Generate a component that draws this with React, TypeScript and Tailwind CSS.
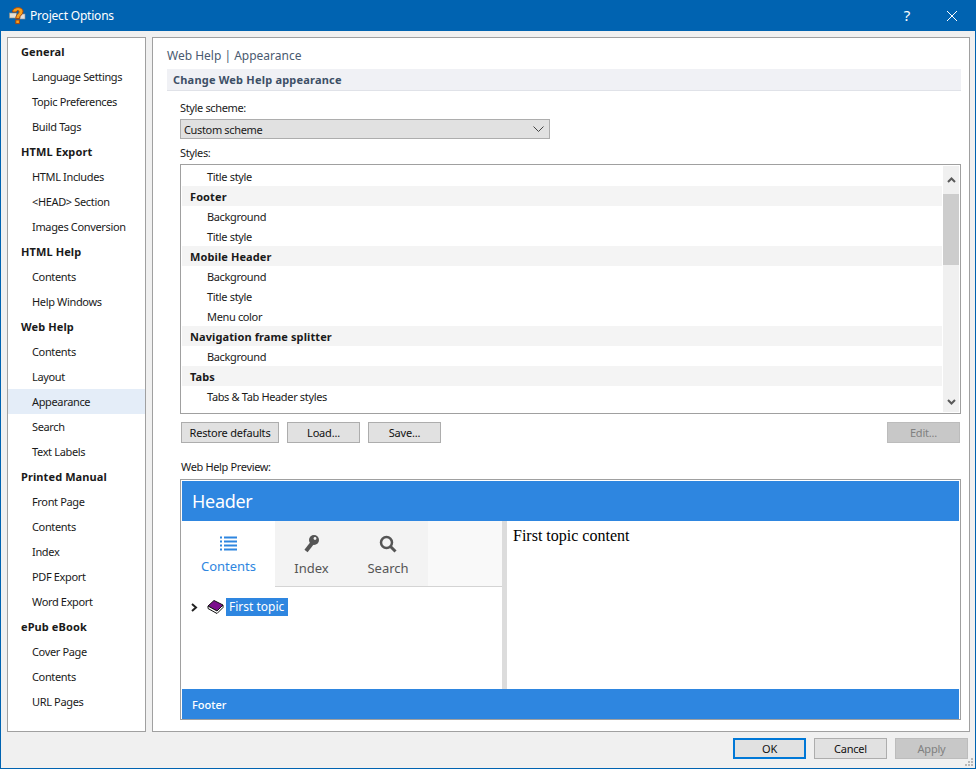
import React from 'react';

const sidebar: [string, boolean][] = [
  ['General', true], ['Language Settings', false], ['Topic Preferences', false], ['Build Tags', false],
  ['HTML Export', true], ['HTML Includes', false], ['<HEAD> Section', false], ['Images Conversion', false],
  ['HTML Help', true], ['Contents', false], ['Help Windows', false],
  ['Web Help', true], ['Contents', false], ['Layout', false], ['Appearance', false], ['Search', false], ['Text Labels', false],
  ['Printed Manual', true], ['Front Page', false], ['Contents', false], ['Index', false], ['PDF Export', false], ['Word Export', false],
  ['ePub eBook', true], ['Cover Page', false], ['Contents', false], ['URL Pages', false],
];

const styles: [string, boolean][] = [
  ['Title style', false],
  ['Footer', true], ['Background', false], ['Title style', false],
  ['Mobile Header', true], ['Background', false], ['Title style', false], ['Menu color', false],
  ['Navigation frame splitter', true], ['Background', false],
  ['Tabs', true], ['Tabs & Tab Header styles', false], ['Active tab', false],
];

function Btn({ label, w = 'w-[73px]', off = false, main = false }: { label: string; w?: string; off?: boolean; main?: boolean }) {
  const look = off
    ? 'bg-[#c8c8c8] border border-[#bcbcbc] text-[#808080]'
    : main
      ? 'bg-[#e1e1e1] border-2 border-[#0078d7] text-[#111]'
      : 'bg-[#e1e1e1] border border-[#adadad] text-[#111]';
  return <div className={`${w} h-[21px] flex items-center justify-center shrink-0 ${look}`}>{label}</div>;
}

function AppIcon() {
  return (
    <svg width="18" height="18" viewBox="0 0 18 18" className="shrink-0">
      <rect x="0.500" y="6" width="7" height="5" fill="#e4e0d4" stroke="#8d8d80" strokeWidth="0.600" />
      <rect x="11" y="7" width="5" height="5" fill="#dedede" stroke="#8d8d8d" strokeWidth="0.600" />
      <path d="M3.500 5 C3.500 -0.500 14 -1 14 4.500 C14 8 10.500 8 10.500 11.500 L6.800 11.500 C6.800 7 10 7 10 4.800 C10 3 7.500 3 7.300 5 Z" fill="#f7a11d" stroke="#a8480c" strokeWidth="1" />
      <rect x="6.800" y="13" width="3.600" height="3.600" fill="#f7a11d" stroke="#a8480c" strokeWidth="1" />
    </svg>
  );
}

function BookIcon() {
  return (
    <svg width="17" height="14" viewBox="0 0 17 14" className="shrink-0">
      <path d="M1 6 L7 0.500 L16 5 L10 11 Z" fill="#7b0f8c" stroke="#111" strokeWidth="1" />
      <path d="M1 6 L1 8.500 L10 13.500 L16 7.500 L16 5 L10 11 Z" fill="#fff" stroke="#111" strokeWidth="1" />
    </svg>
  );
}

function ListIcon() {
  return (
    <svg width="17" height="15" viewBox="0 0 17 15" className="fill-[#2e86e0]">
      <rect x="0" y="0.500" width="2" height="2" />
      <rect x="4" y="0.500" width="13" height="2" />
      <rect x="0" y="4.500" width="2" height="2" />
      <rect x="4" y="4.500" width="13" height="2" />
      <rect x="0" y="8.500" width="2" height="2" />
      <rect x="4" y="8.500" width="13" height="2" />
      <rect x="0" y="12.500" width="2" height="2" />
      <rect x="4" y="12.500" width="13" height="2" />
    </svg>
  );
}

function KeyIcon() {
  return (
    <svg width="15" height="18" viewBox="0 0 15 18" fill="none">
      <path d="M9 7 L2 16" stroke="#555" strokeWidth="4" />
      <circle cx="10" cy="5" r="5" fill="#555" />
      <circle cx="11" cy="3.500" r="1.400" fill="#f3f3f3" />
    </svg>
  );
}

function SearchIcon() {
  return (
    <svg width="18" height="18" viewBox="0 0 18 18" fill="none" stroke="#555">
      <circle cx="7.500" cy="7.500" r="5.500" strokeWidth="2.500" />
      <path d="M11.500 11.500 L16.500 16.500" strokeWidth="3" />
    </svg>
  );
}

function Chevron({ up = false }: { up?: boolean }) {
  return (
    <svg width="9" height="6" viewBox="0 0 9 6" fill="none" stroke="#5a5a5a" strokeWidth="2">
      <path d={up ? 'M1 5 L4.500 1.500 L8 5' : 'M1 1 L4.500 4.500 L8 1'} />
    </svg>
  );
}

function Grip() {
  return (
    <div className="absolute right-[2px] bottom-[2px] grid grid-cols-3 gap-[1px]">
      {[0, 0, 1, 0, 1, 1, 1, 1, 1].map((on, i) => (
        <span key={i} className={`w-[2px] h-[2px] ${on ? 'bg-[#b8b8b8]' : ''}`} />
      ))}
    </div>
  );
}

export default function App() {
  return (
    <div className="relative w-[976px] h-[769px] flex flex-col bg-[#f0f0f0] border border-[#0063b1] overflow-hidden text-[11px] leading-none text-[#1a1a1a] font-['Noto_Sans',sans-serif]">
      {/* title bar */}
      <div className="h-[30px] shrink-0 bg-[#0063b1] text-white flex items-center pl-[8px] text-[12px] tracking-[-0.2px]">
        <AppIcon />
        <span className="ml-[3px] mb-[1px]">Project Options</span>
        <span className="ml-auto mb-[2px] text-[15px]">?</span>
        <svg width="12" height="12" viewBox="0 0 12 12" stroke="#fff" strokeWidth="1" className="ml-[36px] mr-[17px] mb-[1px]">
          <path d="M1 1 L11 11 M11 1 L1 11" />
        </svg>
      </div>

      <div className="flex gap-[6px] px-[6px] pt-[6px]">
        {/* left nav */}
        <div className="w-[139px] h-[695px] shrink-0 bg-white border border-[#a0a0a0] pt-[1px]">
          {sidebar.map(([label, head], i) => (
            <div
              key={i}
              className={`h-[25px] flex items-center ${head ? 'pl-[13px] font-bold tracking-[0.1px]' : 'pl-[24px] tracking-[-0.35px]'} ${label === 'Appearance' ? 'bg-[#e4edf8]' : ''}`}
            >
              {label}
            </div>
          ))}
        </div>

        {/* right panel */}
        <div className="w-[818px] h-[695px] bg-white border border-[#a0a0a0] pl-[14px] pr-[8px] flex flex-col">
          <div className="h-[31px] flex items-center pt-[4px] text-[12px] text-[#4a5a70]">Web Help | Appearance</div>
          <div className="h-[22px] shrink-0 flex items-center pl-[6px] pb-[1px] bg-[#f0f1f5] border-b border-[#e0e2e8] font-bold tracking-[0.2px] text-[#3d4f66]">
            Change Web Help appearance
          </div>

          <div className="pl-[13px] mt-[11px] tracking-[-0.35px]">Style scheme:</div>
          <div className="ml-[13px] mt-[6px] w-[370px] h-[20px] bg-[#e1e1e1] border border-[#adadad] flex items-center justify-between pl-[3px] pr-[5px] tracking-[-0.35px]">
            <span>Custom scheme</span>
            <svg width="11" height="7" viewBox="0 0 11 7" fill="none" stroke="#444" strokeWidth="1">
              <path d="M0.500 0.500 L5.500 5.500 L10.500 0.500" />
            </svg>
          </div>
          <div className="pl-[13px] mt-[8px] tracking-[-0.35px]">Styles:</div>

          {/* styles list */}
          <div className="ml-[13px] mt-[6px] h-[250px] border border-[#a0a0a0] flex p-[1px]">
            <div className="flex-1 h-[246px] overflow-hidden">
              {styles.map(([label, head], i) => (
                <div
                  key={i}
                  className={`h-[20px] shrink-0 flex items-center ${head ? 'pl-[8px] font-bold tracking-[0.1px] bg-[#f4f4f4]' : 'pl-[25px] tracking-[-0.35px]'}`}
                >
                  {label}
                </div>
              ))}
            </div>
            <div className="w-[16px] ml-[1px] bg-[#f0f0f0] flex flex-col">
              <div className="h-[28px] flex items-center justify-center">
                <Chevron up />
              </div>
              <div className="h-[71px] bg-[#cdcdcd]" />
              <div className="mt-auto h-[20px] flex items-center justify-center">
                <Chevron />
              </div>
            </div>
          </div>

          {/* list buttons */}
          <div className="ml-[14px] mt-[8px] flex gap-[8px] tracking-[-0.2px]">
            <Btn label="Restore defaults" w="w-[98px]" />
            <Btn label="Load..." />
            <Btn label="Save..." />
            <div className="ml-auto mr-[1px]">
              <Btn label="Edit..." off />
            </div>
          </div>

          <div className="pl-[14px] mt-[18px] tracking-[-0.35px]">Web Help Preview:</div>

          {/* preview */}
          <div className="ml-[13px] mt-[7px] w-[781px] h-[241px] border border-[#a0a0a0] px-[1px] pt-[1px] flex flex-col">
            <div className="h-[40px] shrink-0 bg-[#2e86e0] text-white text-[18px] tracking-[-0.3px] flex items-center pl-[10px]">Header</div>
            <div className="flex-1 flex min-h-0">
              <div className="w-[320px] shrink-0 flex flex-col">
                <div className="h-[66px] flex border-b border-[#d4d4d4] bg-[#f9f9f9] text-[13px] text-[#555]">
                  <div className="w-[93px] h-[66px] bg-white flex flex-col items-center pt-[15px] text-[#2e86e0]">
                    <ListIcon />
                    <span className="mt-[9px]">Contents</span>
                  </div>
                  <div className="w-[153px] h-[65px] bg-[#f3f3f3] flex">
                    <div className="w-[73px] flex flex-col items-center pt-[14px]">
                      <KeyIcon />
                      <span className="mt-[9px]">Index</span>
                    </div>
                    <div className="w-[80px] flex flex-col items-center pt-[14px]">
                      <SearchIcon />
                      <span className="mt-[9px]">Search</span>
                    </div>
                  </div>
                </div>
                <div className="flex items-center pl-[9px] mt-[11px]">
                  <svg width="7" height="9" viewBox="0 0 7 9" fill="none" stroke="#222" strokeWidth="2">
                    <path d="M1 1 L5 4.500 L1 8" />
                  </svg>
                  <span className="ml-[9px]"><BookIcon /></span>
                  <span className="ml-[2px] h-[18px] w-[62px] bg-[#2e86e0] text-white text-[12px] flex items-center pl-[3px]">First topic</span>
                </div>
              </div>
              <div className="w-[5px] shrink-0 bg-[#dcdcdc]" />
              <div className="flex-1 pl-[6px] pt-[7px] font-['Liberation_Serif',serif] text-[16px] text-black">First topic content</div>
            </div>
            <div className="h-[30px] shrink-0 bg-[#2e86e0] text-white font-medium flex items-center pl-[10px]">Footer</div>
          </div>
        </div>
      </div>

      {/* dialog buttons */}
      <div className="flex justify-end gap-[8px] pr-[7px] mt-[6px] tracking-[-0.2px]">
        <Btn label="OK" main />
        <Btn label="Cancel" />
        <Btn label="Apply" off />
      </div>
      <Grip />
    </div>
  );
}
